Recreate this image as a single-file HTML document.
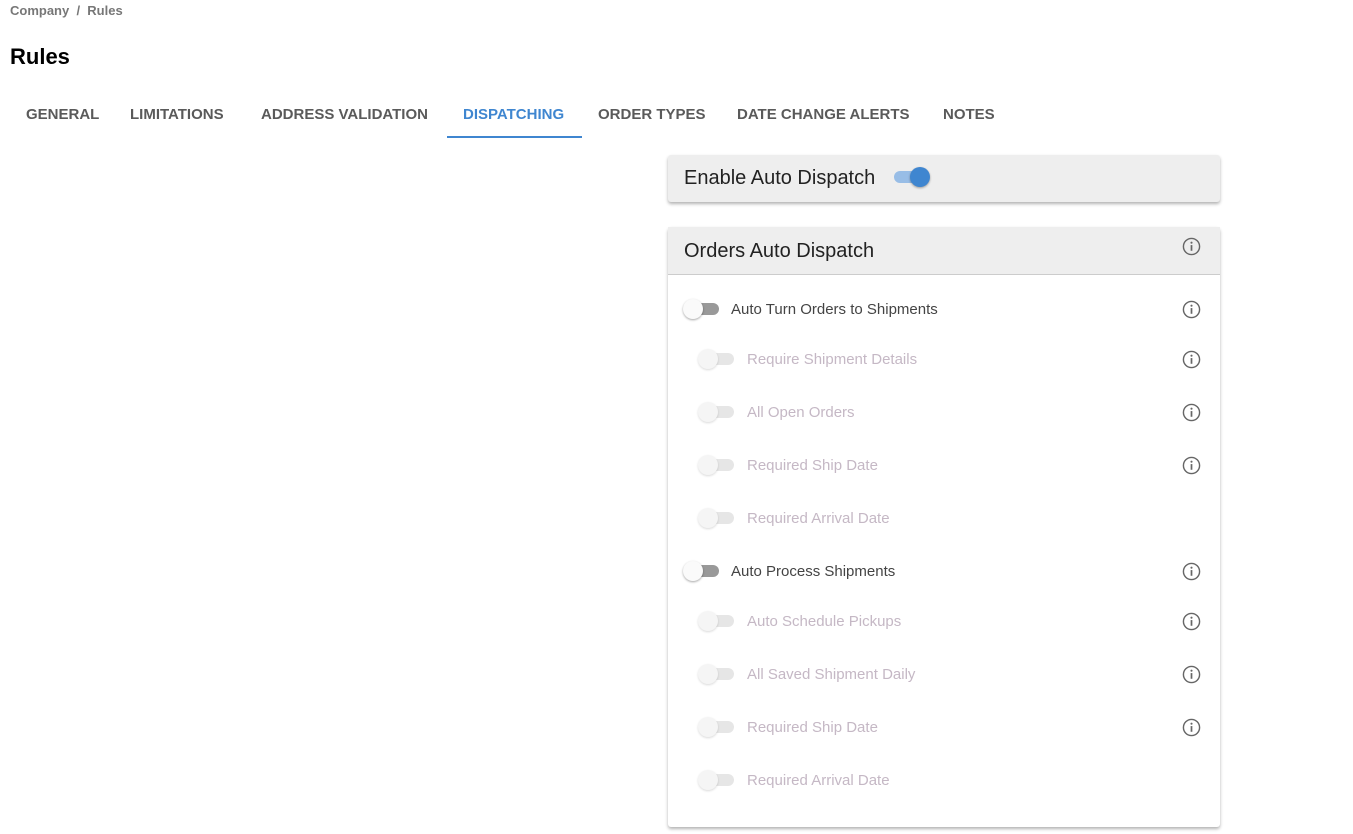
<!DOCTYPE html>
<html><head><style>
body{margin:0;width:1353px;height:834px;background:#fff;font-family:"Liberation Sans",sans-serif;position:relative;overflow:hidden}
.a{position:absolute}
.bc{left:10px;top:3px;font-size:13px;font-weight:bold;color:#777}
.h1{left:10px;top:44px;font-size:22px;font-weight:bold;color:#000}
.tab{top:106px;font-size:15px;font-weight:bold;color:#5a5a5a;letter-spacing:0}
.card{left:668px;width:552px;background:#fff;box-shadow:0 2px 3px rgba(0,0,0,.3);border-radius:3px}
.lbl{font-size:15px;color:#444}
.sub{font-size:15px;color:#c5b8c5}
.tr{width:30px;height:12px;border-radius:6px}
.kn{width:20px;height:20px;border-radius:50%;box-shadow:0 1px 2px rgba(0,0,0,.35);background:#fafafa}
</style></head><body>
<div class="a bc">Company &nbsp;/&nbsp; Rules</div>
<div class="a h1">Rules</div>
<div class="a tab" style="left:26px">GENERAL</div>
<div class="a tab" style="left:130px">LIMITATIONS</div>
<div class="a tab" style="left:261px">ADDRESS VALIDATION</div>
<div class="a tab" style="left:463px;color:#3f86d0">DISPATCHING</div>
<div class="a" style="left:447px;top:136px;width:135px;height:2px;background:#3f86d0"></div>
<div class="a tab" style="left:598px">ORDER TYPES</div>
<div class="a tab" style="left:737px">DATE CHANGE ALERTS</div>
<div class="a tab" style="left:943px">NOTES</div>

<div class="a card" style="top:155px;height:47px;background:#eee">
<div class="a" style="left:16px;top:12px;font-size:20px;color:#222">Enable Auto Dispatch</div>
<div class="a tr" style="left:226px;top:16px;background:#98bde6"></div>
<div class="a kn" style="left:242px;top:12px;background:#3f86d0"></div>
</div>

<div class="a card" style="top:227px;height:600px">
<div class="a" style="left:0;top:0;width:552px;height:47px;background:#eee;border-bottom:1px solid #ccc"></div>
<div class="a" style="left:16px;top:13px;font-size:20px;color:#222">Orders Auto Dispatch</div>
</div>

<div id="rows"></div>
<script>
var rows=[[309,0,"Auto Turn Orders to Shipments",1],[359,1,"Require Shipment Details",1],[412,1,"All Open Orders",1],[465,1,"Required Ship Date",1],[518,1,"Required Arrival Date",0],[571,0,"Auto Process Shipments",1],[621,1,"Auto Schedule Pickups",1],[674,1,"All Saved Shipment Daily",1],[727,1,"Required Ship Date",1],[780,1,"Required Arrival Date",0]];
var h='';
function info(y){return '<svg class="a" style="left:1182px;top:'+(y-9)+'px" width="19" height="19" viewBox="0 0 20 20"><circle cx="10" cy="10" r="8.5" fill="none" stroke="#666" stroke-width="1.5"/><rect x="9.1" y="8.5" width="1.8" height="6" fill="#666"/><circle cx="10" cy="6" r="1.1" fill="#666"/></svg>';}
h+=info(246);
rows.forEach(function(r){var y=r[0],s=r[1];var tx=s?698:683;
h+='<div class="a tr" style="left:'+(tx+6)+'px;top:'+(y-6)+'px;background:'+(s?'#e6e6e6':'#999')+'"></div>';
h+='<div class="a kn" style="left:'+tx+'px;top:'+(y-10)+'px;'+(s?'background:#f5f5f5;box-shadow:0 1px 2px rgba(0,0,0,.15)':'')+'"></div>';
h+='<div class="a '+(s?'sub':'lbl')+'" style="left:'+(s?747:731)+'px;top:'+(y-8)+'px">'+r[2]+'</div>';
if(r[3])h+=info(y);});
document.getElementById('rows').innerHTML=h;
</script>
</body></html>
